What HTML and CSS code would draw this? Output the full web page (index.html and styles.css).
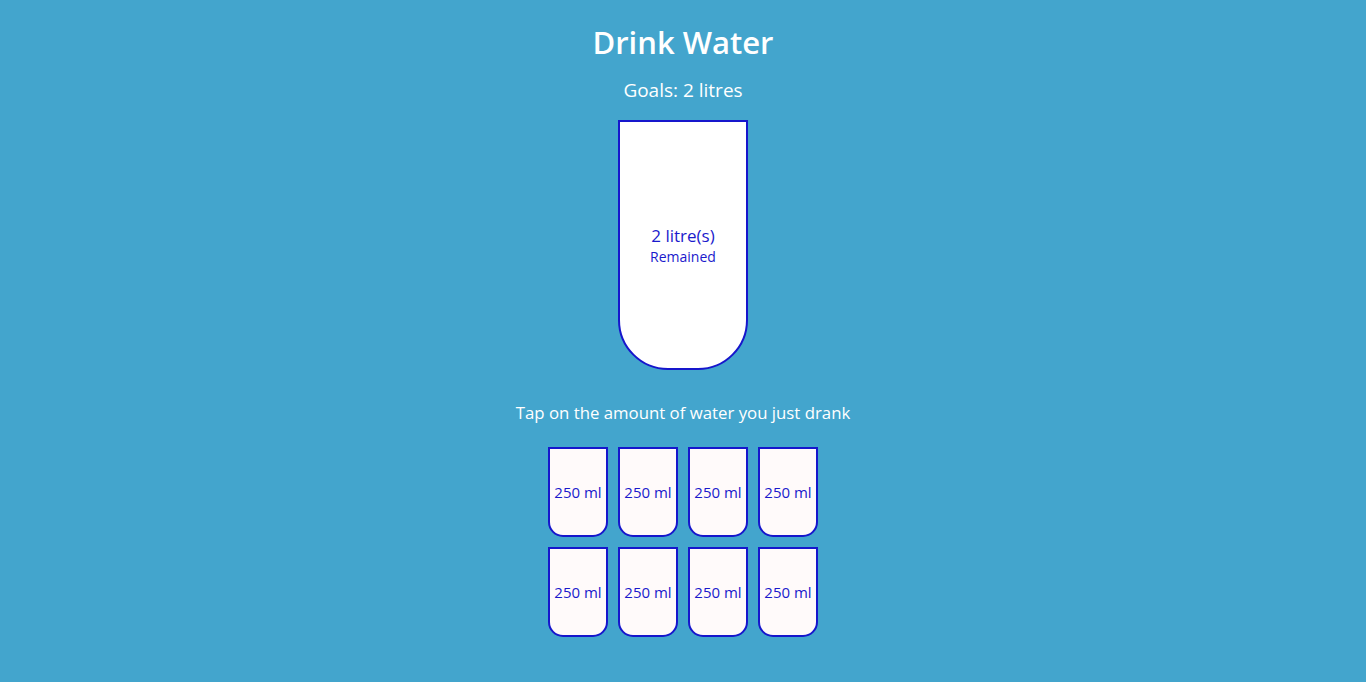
FILE: index.html
```html
<!DOCTYPE html>
<html lang="en">
<head>
<meta charset="UTF-8">
<title>Drink Water</title>
<link rel="stylesheet" href="styles.css">
</head>
<body>
  <h1 class="title">Drink Water</h1>
  <h3 class="goal">Goals: 2 litres</h3>
  <div class="cup cup-big">
    <div class="remained">
      <span class="liters">2 litre(s)</span>
      <small class="remained-label">Remained</small>
    </div>
  </div>
  <p class="text">Tap on the amount of water you just drank</p>
  <div class="cups">
    <div class="cup cup-small">250 ml</div>
    <div class="cup cup-small">250 ml</div>
    <div class="cup cup-small">250 ml</div>
    <div class="cup cup-small">250 ml</div>
    <div class="cup cup-small">250 ml</div>
    <div class="cup cup-small">250 ml</div>
    <div class="cup cup-small">250 ml</div>
    <div class="cup cup-small">250 ml</div>
  </div>
</body>
</html>
```
FILE: styles.css
```css
* { box-sizing: border-box; }

body {
  margin: 0;
  background-color: #43a5cd;
  color: #fff;
  font-family: "Open Sans", "Noto Sans", sans-serif;
  display: flex;
  flex-direction: column;
  align-items: center;
  padding-top: 22px;
  height: 682px;
  overflow: hidden;
}

.title {
  margin: 0;
  font-size: 31px;
  line-height: 40px;
  font-weight: 600;
}

.goal {
  margin: 16px 0 0;
  font-size: 19px;
  line-height: 24px;
  font-weight: 400;
}

.cup {
  background-color: #fff;
  border: 2px solid #1616cc;
  color: #1a1acc;
  display: flex;
  align-items: center;
  justify-content: center;
  text-align: center;
}

.cup-big {
  margin-top: 18px;
  width: 130px;
  height: 250px;
  border-radius: 0 0 50px 50px;
}

.remained {
  display: flex;
  flex-direction: column;
  align-items: center;
}

.liters {
  font-size: 17px;
  line-height: 22px;
}

.remained-label {
  font-size: 14px;
  line-height: 19px;
}

.text {
  margin: 31px 0 0;
  font-size: 16.8px;
  line-height: 24px;
}

.cups {
  margin-top: 22px;
  display: grid;
  grid-template-columns: repeat(4, 60px);
  gap: 10px;
}

.cup-small {
  width: 60px;
  height: 90px;
  background-color: #fffafa;
  border-radius: 0 0 15px 15px;
  font-size: 15px;
}
```
